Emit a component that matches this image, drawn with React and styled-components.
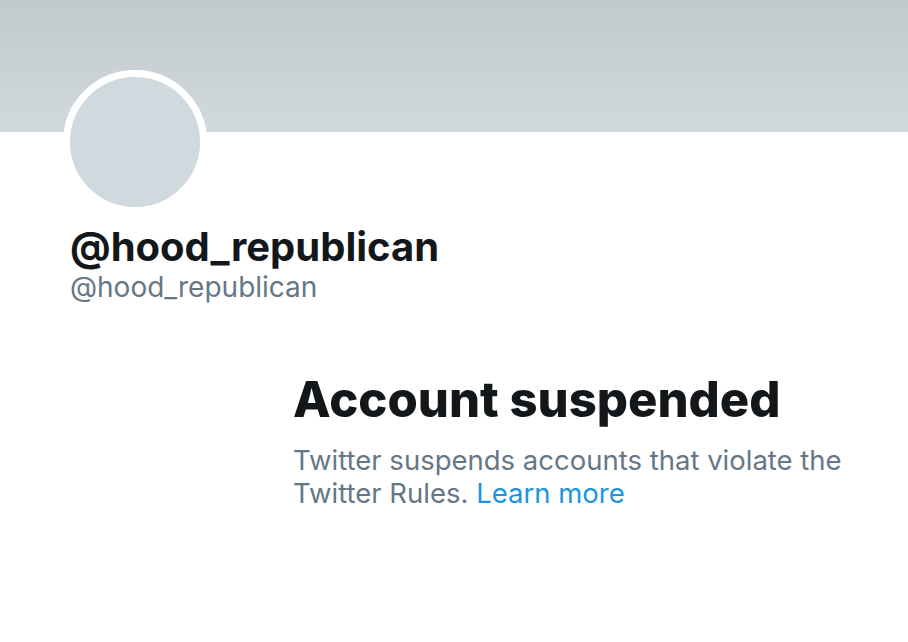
import styled, { createGlobalStyle } from 'styled-components';

const GlobalStyle = createGlobalStyle`
  body {
    margin: 0;
    background: #ffffff;
    font-family: Inter, "Liberation Sans", sans-serif;
  }
`;

const Page = styled.div`
  width: 908px;
  height: 642px;
  overflow: hidden;
  background: #ffffff;
`;

const Banner = styled.div`
  height: 132px;
  background: linear-gradient(180deg, #c2c9cd 0%, #d1d9dd 100%);
`;

const Profile = styled.div`
  padding-left: 63px;
`;

const Avatar = styled.div`
  width: 130px;
  height: 130px;
  margin-top: -62px;
  border-radius: 50%;
  border: 7px solid #ffffff;
  background: #cfd9de;
`;

const Names = styled.div`
  padding-left: 7px;
  margin-top: 10px;
`;

const DisplayName = styled.div`
  font-size: 40px;
  font-weight: 700;
  color: #14171a;
  line-height: 46px;
`;

const Handle = styled.div`
  font-size: 28px;
  color: #657786;
  line-height: 34px;
`;

const Notice = styled.div`
  padding-left: 293px;
  margin-top: 68px;
  width: 580px;
`;

const Title = styled.h1`
  margin: 0;
  font-size: 49px;
  font-weight: 800;
  color: #14171a;
  line-height: 56px;
`;

const Body = styled.p`
  margin: 16px 0 0;
  font-size: 27.5px;
  color: #657786;
  line-height: 33px;
`;

const Link = styled.a`
  color: #1b95e0;
  text-decoration: none;
`;

export default function App() {
  return (
    <Page>
      <GlobalStyle />
      <Banner />
      <Profile>
        <Avatar />
        <Names>
          <DisplayName>@hood_republican</DisplayName>
          <Handle>@hood_republican</Handle>
        </Names>
      </Profile>
      <Notice>
        <Title>Account suspended</Title>
        <Body>
          Twitter suspends accounts that violate the Twitter Rules.{' '}
          <Link href="#">Learn more</Link>
        </Body>
      </Notice>
    </Page>
  );
}
